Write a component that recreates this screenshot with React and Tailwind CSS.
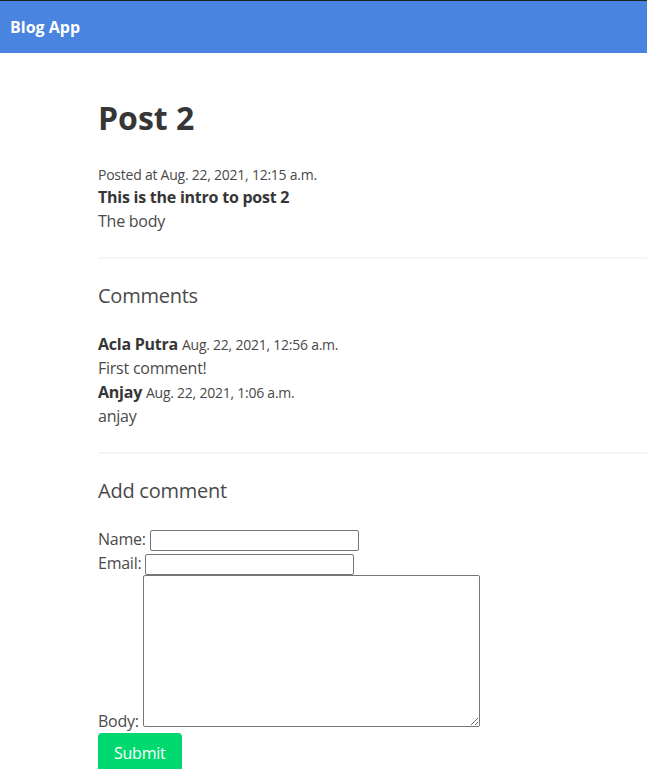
const comments = [
  { name: "Acla Putra", date: "Aug. 22, 2021, 12:56 a.m.", body: "First comment!" },
  { name: "Anjay", date: "Aug. 22, 2021, 1:06 a.m.", body: "anjay" },
];

const fieldClass =
  "border border-[#767676] rounded-[2px] bg-white px-[2px] py-[1px] text-[13.33px] align-baseline";

const App = () => {
  return (
    <div className="min-h-screen bg-white font-['Open_Sans',sans-serif] tracking-[-0.015em] text-[#4a4a4a]">
      <nav className="flex h-[53px] items-center border-t border-[#1f1f1f] bg-[#4884e0] px-[10px]">
        <span className="text-base font-bold tracking-normal text-white">Blog App</span>
      </nav>

      <main className="pl-[98px] pt-[47px]">
        <h1 className="text-[32px] font-bold leading-[1.125] tracking-normal text-[#363636]">Post 2</h1>

        <div className="mt-[29px] leading-6">
          <p className="text-sm">Posted at Aug. 22, 2021, 12:15 a.m.</p>
          <p className="font-bold text-[#363636]">This is the intro to post 2</p>
          <p>The body</p>
        </div>

        <hr className="my-6 h-[2px] border-0 bg-[#f5f5f5]" />

        <h2 className="text-xl leading-[1.25]">Comments</h2>

        <div className="mt-6 leading-6">
          {comments.map((comment) => (
            <div key={comment.name}>
              <p>
                <strong className="font-bold text-[#363636]">{comment.name}</strong>{" "}
                <small className="text-sm">{comment.date}</small>
              </p>
              <p>{comment.body}</p>
            </div>
          ))}
        </div>

        <hr className="my-6 h-[2px] border-0 bg-[#f5f5f5]" />

        <h2 className="text-xl leading-[1.25]">Add comment</h2>

        <form className="mt-6 leading-6" onSubmit={(event) => event.preventDefault()}>
          <label htmlFor="name">Name:</label>{" "}
          <input id="name" type="text" className={`${fieldClass} h-[21px] w-[209px]`} />
          <br />
          <label htmlFor="email">Email:</label>{" "}
          <input id="email" type="email" className={`${fieldClass} h-[21px] w-[209px]`} />
          <br />
          <label htmlFor="body">Body:</label>{" "}
          <textarea id="body" cols="40" rows="10" className={`${fieldClass} h-[152px] w-[337px]`} />
          <br />
          <button
            type="submit"
            className="h-10 rounded-[4px] bg-[#00d96f] px-4 text-base text-white"
          >
            Submit
          </button>
        </form>
      </main>
    </div>
  );
};

export default App;
